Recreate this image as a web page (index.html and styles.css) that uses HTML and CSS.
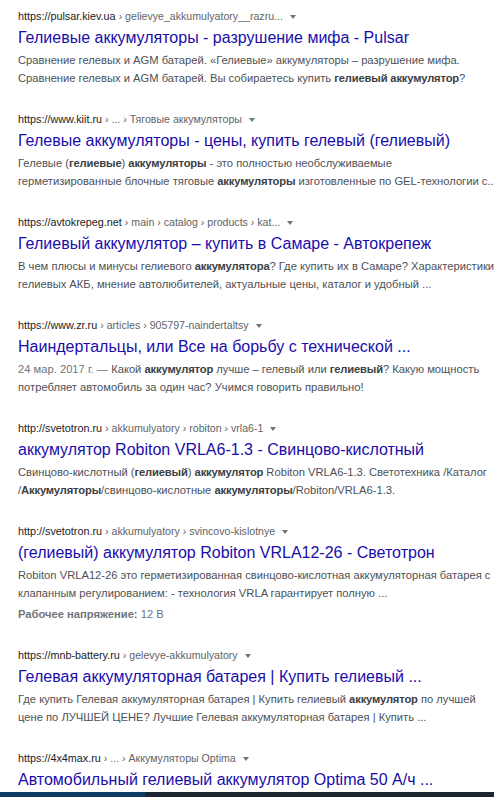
FILE: index.html
```html
<!DOCTYPE html>
<html>
<head>
	<meta charset="UTF-8">
	<title>гелиевый аккумулятор - Поиск</title>
	<link rel="stylesheet" href="styles.css">
</head>
<body>
	<!--результаты поиска-->
	<div class="results">
		<div class="result">
			<div class="cite">https://pulsar.kiev.ua <span class="crumb">› gelievye_akkumulyatory__razru...</span><i class="arrow"></i></div>
			<a class="title" href="javascript:;">Гелиевые аккумуляторы - разрушение мифа - Pulsar</a>
			<div class="snippet">Сравнение гелевых и AGM батарей. «Гелиевые» аккумуляторы – разрушение мифа.<br>Сравнение гелевых и AGM батарей. Вы собираетесь купить <b>гелиевый аккумулятор</b>?</div>
		</div>

		<div class="result">
			<div class="cite">https://www.kiit.ru <span class="crumb">› ... › Тяговые аккумуляторы</span><i class="arrow"></i></div>
			<a class="title" href="javascript:;">Гелевые аккумуляторы - цены, купить гелевый (гелиевый)</a>
			<div class="snippet">Гелевые (<b>гелиевые</b>) <b>аккумуляторы</b> - это полностью необслуживаемые<br>герметизированные блочные тяговые <b>аккумуляторы</b> изготовленные по GEL-технологии с...</div>
		</div>

		<div class="result">
			<div class="cite">https://avtokrepeg.net <span class="crumb">› main › catalog › products › kat...</span><i class="arrow"></i></div>
			<a class="title" href="javascript:;">Гелиевый аккумулятор – купить в Самаре - Автокрепеж</a>
			<div class="snippet">В чем плюсы и минусы гелиевого <b>аккумулятора</b>? Где купить их в Самаре? Характеристики<br>гелиевых АКБ, мнение автолюбителей, актуальные цены, каталог и удобный ...</div>
		</div>

		<div class="result">
			<div class="cite">https://www.zr.ru <span class="crumb">› articles › 905797-naindertaltsy</span><i class="arrow"></i></div>
			<a class="title" href="javascript:;">Наиндертальцы, или Все на борьбу с технической ...</a>
			<div class="snippet"><span class="date">24 мар. 2017 г. — </span>Какой <b>аккумулятор</b> лучше – гелевый или <b>гелиевый</b>? Какую мощность<br>потребляет автомобиль за один час? Учимся говорить правильно!</div>
		</div>

		<div class="result">
			<div class="cite">http://svetotron.ru <span class="crumb">› akkumulyatory › robiton › vrla6-1</span><i class="arrow"></i></div>
			<a class="title" href="javascript:;">аккумулятор Robiton VRLA6-1.3 - Свинцово-кислотный</a>
			<div class="snippet">Свинцово-кислотный (<b>гелиевый</b>) <b>аккумулятор</b> Robiton VRLA6-1.3. Светотехника /Каталог<br>/<b>Аккумуляторы</b>/свинцово-кислотные <b>аккумуляторы</b>/Robiton/VRLA6-1.3.</div>
		</div>

		<div class="result">
			<div class="cite">http://svetotron.ru <span class="crumb">› akkumulyatory › svincovo-kislotnye</span><i class="arrow"></i></div>
			<a class="title" href="javascript:;">(гелиевый) аккумулятор Robiton VRLA12-26 - Светотрон</a>
			<div class="snippet">Robiton VRLA12-26 это герметизированная свинцово-кислотная аккумуляторная батарея с<br>клапанным регулированием: - технология VRLA гарантирует полную ...</div>
			<div class="extra"><b>Рабочее напряжение:</b> 12 В</div>
		</div>

		<div class="result">
			<div class="cite">https://mnb-battery.ru <span class="crumb">› gelevye-akkumulyatory</span><i class="arrow"></i></div>
			<a class="title" href="javascript:;">Гелевая аккумуляторная батарея | Купить гелиевый ...</a>
			<div class="snippet">Где купить Гелевая аккумуляторная батарея | Купить гелиевый <b>аккумулятор</b> по лучшей<br>цене по ЛУЧШЕЙ ЦЕНЕ? Лучшие Гелевая аккумуляторная батарея | Купить ...</div>
		</div>

		<div class="result">
			<div class="cite">https://4x4max.ru <span class="crumb">› ... › Аккумуляторы Optima</span><i class="arrow"></i></div>
			<a class="title" href="javascript:;">Автомобильный гелиевый аккумулятор Optima 50 А/ч ...</a>
		</div>
	</div>

	<!--панель задач снизу-->
	<div class="taskbar">
		<div class="start"></div>
	</div>
</body>
</html>
```

FILE: styles.css
```css
* {
	margin: 0;
	padding: 0;
}

body {
	font-family: "Liberation Sans", Arial, sans-serif;
	background: #fff;
	overflow: hidden;
}

.results {
	padding: 7px 0 0 18px;
}

.result {
	margin-bottom: 23px;
	white-space: nowrap;
}

.cite {
	font-size: 10.8px;
	line-height: 18px;
	color: #202124;
}

.crumb {
	color: #5f6368;
	font-size: 10.6px;
}

/*маленький треугольник после адреса*/
.arrow {
	display: inline-block;
	margin-left: 7px;
	vertical-align: middle;
	border-top: 4px solid #70757a;
	border-left: 3.5px solid transparent;
	border-right: 3.5px solid transparent;
}

.title {
	display: block;
	font-size: 16px;
	line-height: 26px;
	color: #1a0dab;
	text-decoration: none;
}

.snippet,
.extra {
	font-size: 11.2px;
	line-height: 18px;
	color: #4d5156;
}

.snippet b {
	color: #3c4043;
	letter-spacing: -0.15px;
}

.date {
	color: #70757a;
}

.extra {
	margin-top: 3px;
	color: #70757a;
}

.taskbar {
	position: fixed;
	left: 0;
	right: 0;
	bottom: 0;
	height: 5px;
	background: #1c2532;
}

.start {
	width: 145px;
	height: 100%;
	background: #0e3c62;
}
```
